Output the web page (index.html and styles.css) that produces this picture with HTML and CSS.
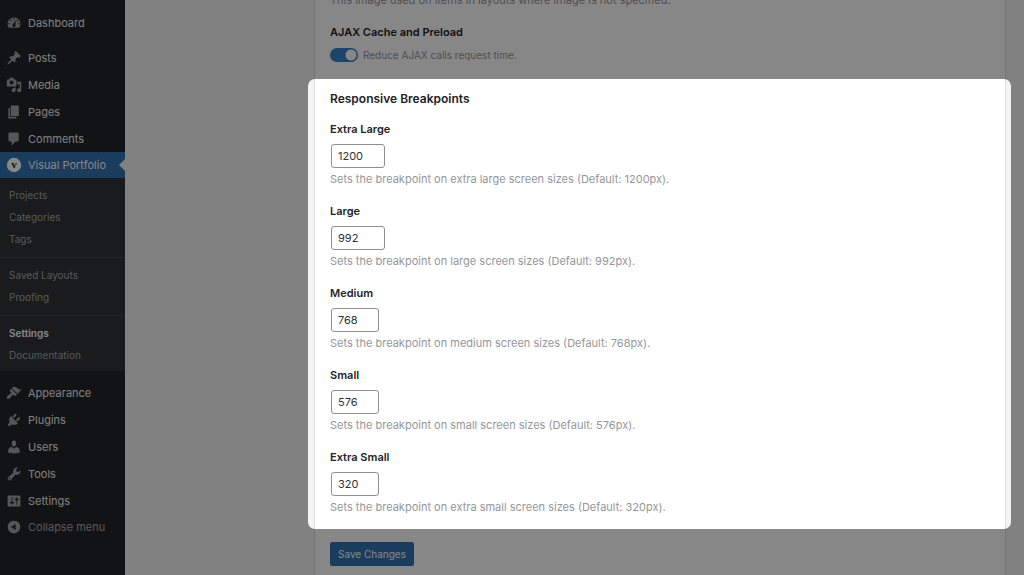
FILE: index.html
```
<!DOCTYPE html>
<html lang="en">
<head>
    <meta charset="UTF-8">
    <title>Settings | Visual Portfolio</title>
    <meta name="viewport" content="width=device-width, initial-scale=1.0">
    <link rel="stylesheet" href="styles.css">
</head>
<body>

    <nav class="sidebar">
        <ul class="menu">
            <li><a class="menu-item" href="#"><svg class="icon" viewBox="0 0 20 20"><path d="M3.76 16h12.48A7.998 7.998 0 0 0 10 3a7.998 7.998 0 0 0-6.24 13zM10 4c.55 0 1 .45 1 1s-.45 1-1 1-1-.45-1-1 .45-1 1-1zM6 6c.55 0 1 .45 1 1s-.45 1-1 1-1-.45-1-1 .45-1 1-1zm8 0c.55 0 1 .45 1 1s-.45 1-1 1-1-.45-1-1 .45-1 1-1zm-5.37 5.55L12 7v6c0 1.1-.9 2-2 2s-2-.9-2-2c0-.57.24-1.08.63-1.45zM4 10c.55 0 1 .45 1 1s-.45 1-1 1-1-.45-1-1 .45-1 1-1zm12 0c.55 0 1 .45 1 1s-.45 1-1 1-1-.45-1-1 .45-1 1-1z" fill-rule="evenodd"/></svg>Dashboard</a></li>
        </ul>

        <ul class="menu">
            <li><a class="menu-item" href="#"><svg class="icon" viewBox="0 0 20 20"><path d="M10.44 3.02l1.82-1.82 6.36 6.35-1.83 1.82c-1.05-.68-2.48-.57-3.41.36l-.75.75c-.92.93-1.04 2.35-.35 3.41l-1.83 1.82-2.41-2.41-2.8 2.79c-.42.42-3.38 2.71-3.8 2.29s1.86-3.39 2.28-3.81l2.79-2.79L4.1 9.36l1.83-1.82c1.05.69 2.48.57 3.4-.36l.75-.75c.93-.92 1.05-2.35.36-3.41z"/></svg>Posts</a></li>
            <li><a class="menu-item" href="#"><svg class="icon" viewBox="0 0 20 20"><path d="M13 11V4c0-.55-.45-1-1-1h-1.67L9 1H5L3.67 3H2c-.55 0-1 .45-1 1v7c0 .55.45 1 1 1h10c.55 0 1-.45 1-1zM7 4.5c1.38 0 2.5 1.12 2.5 2.5S8.38 9.5 7 9.5 4.5 8.38 4.5 7 5.62 4.5 7 4.5zM14 6h5v10.5c0 1.38-1.12 2.5-2.5 2.5S14 17.88 14 16.5s1.12-2.5 2.5-2.5c.17 0 .34.02.5.05V9h-3V6zm-4 8.05V13h2v3.5c0 1.38-1.12 2.5-2.5 2.5S7 17.88 7 16.5 8.12 14 9.5 14c.17 0 .34.02.5.05z" fill-rule="evenodd"/></svg>Media</a></li>
            <li><a class="menu-item" href="#"><svg class="icon" viewBox="0 0 20 20"><path d="M6 15V2h10v13H6zm-1 1h8v2H3V5h2v11z"/></svg>Pages</a></li>
            <li><a class="menu-item" href="#"><svg class="icon" viewBox="0 0 20 20"><path d="M5 2h9c1.1 0 2 .9 2 2v7c0 1.1-.9 2-2 2h-2l-5 5v-5H5c-1.1 0-2-.9-2-2V4c0-1.1.9-2 2-2z"/></svg>Comments</a></li>
            <li>
                <a class="menu-item current" href="#"><svg class="icon" viewBox="0 0 20 20"><circle cx="10" cy="10" r="9"/><text class="icon-mark" x="10" y="14" text-anchor="middle">v</text></svg>Visual Portfolio</a>
                <ul class="submenu">
                    <li><a href="#">Projects</a></li>
                    <li><a href="#">Categories</a></li>
                    <li><a href="#">Tags</a></li>
                    <li class="divider"></li>
                    <li><a href="#">Saved Layouts</a></li>
                    <li><a href="#">Proofing</a></li>
                    <li class="divider"></li>
                    <li><a class="active" href="#">Settings</a></li>
                    <li><a href="#">Documentation</a></li>
                </ul>
            </li>
        </ul>

        <ul class="menu">
            <li><a class="menu-item" href="#"><svg class="icon" viewBox="0 0 20 20"><path d="M14.48 11.06L7.41 3.99l1.5-1.5c.5-.56 2.3-.47 3.51.32 1.21.8 1.43 1.28 2.91 2.1 1.18.64 2.45 1.26 4.45.85zm-.71.71L6.7 4.7 4.93 6.47c-.39.39-.39 1.02 0 1.41l1.06 1.06c.39.39.39 1.03 0 1.42-.6.6-1.43 1.11-2.21 1.69-.35.26-.7.53-1.01.84C1.43 14.23.4 16.08 1.4 17.07c.99 1 2.84-.03 4.18-1.36.31-.31.58-.66.85-1.02.57-.78 1.08-1.61 1.69-2.21.39-.39 1.02-.39 1.41 0l1.06 1.06c.39.39 1.02.39 1.41 0z"/></svg>Appearance</a></li>
            <li><a class="menu-item" href="#"><svg class="icon" viewBox="0 0 20 20"><path d="M13.11 4.36L9.87 7.6 8 5.73l3.24-3.24c.35-.34 1.05-.2 1.56.32.52.51.66 1.21.31 1.55zm-8 1.77l.91-1.12 9.01 9.01-1.19.84c-.71.71-2.63 1.16-3.82 1.16H6.14L4.9 17.26c-.59.59-1.54.59-2.12 0-.59-.58-.59-1.53 0-2.12l1.24-1.24v-3.88c0-1.13.4-3.19 1.09-3.89zm7.26 3.97l3.24-3.24c.34-.35 1.04-.21 1.55.31.52.51.66 1.21.31 1.55l-3.24 3.25z"/></svg>Plugins</a></li>
            <li><a class="menu-item" href="#"><svg class="icon" viewBox="0 0 20 20"><path d="M10 9.25c-2.27 0-2.73-3.44-2.73-3.44C7 4.02 7.82 2 9.97 2c2.16 0 2.98 2.02 2.71 3.81 0 0-.41 3.44-2.68 3.44zm0 2.57L12.72 10c2.39 0 4.52 2.33 4.52 4.53v2.49s-3.65 1.13-7.24 1.13c-3.65 0-7.24-1.13-7.24-1.13v-2.49c0-2.25 1.94-4.48 4.47-4.48z"/></svg>Users</a></li>
            <li><a class="menu-item" href="#"><svg class="icon" viewBox="0 0 20 20"><path d="M16.68 9.77c-1.34 1.34-3.3 1.67-4.95.99l-5.41 6.52c-.99.99-2.59.99-3.58 0s-.99-2.59 0-3.57l6.52-5.42c-.68-1.65-.35-3.61.99-4.95 1.28-1.28 3.12-1.62 4.72-1.06l-2.89 2.89 2.82 2.82 2.86-2.87c.53 1.58.18 3.39-1.08 4.65zM3.81 16.21c.4.39 1.04.39 1.43 0 .4-.4.4-1.04 0-1.43-.39-.4-1.03-.4-1.43 0-.39.39-.39 1.03 0 1.43z" fill-rule="evenodd"/></svg>Tools</a></li>
            <li><a class="menu-item" href="#"><svg class="icon" viewBox="0 0 20 20"><path d="M18 16V4c0-.55-.45-1-1-1H3c-.55 0-1 .45-1 1v12c0 .55.45 1 1 1h14c.55 0 1-.45 1-1zM8 11h1c.55 0 1 .45 1 1s-.45 1-1 1H8v1.5c0 .28-.22.5-.5.5s-.5-.22-.5-.5V13H6c-.55 0-1-.45-1-1s.45-1 1-1h1V5.5c0-.28.22-.5.5-.5s.5.22.5.5V11zm5-2h-1c-.55 0-1-.45-1-1s.45-1 1-1h1V5.5c0-.28.22-.5.5-.5s.5.22.5.5V7h1c.55 0 1 .45 1 1s-.45 1-1 1h-1v5.5c0 .28-.22.5-.5.5s-.5-.22-.5-.5V9z" fill-rule="evenodd"/></svg>Settings</a></li>
            <li><button class="menu-item collapse" type="button"><svg class="icon" viewBox="0 0 20 20"><path d="M10 2.16c4.33 0 7.84 3.51 7.84 7.84s-3.51 7.84-7.84 7.84S2.16 14.33 2.16 10 5.71 2.16 10 2.16zm2 11.72V6.12L6.18 9.97z" fill-rule="evenodd"/></svg>Collapse menu</button></li>
        </ul>
    </nav>

    <main class="content">
        <form class="card">
            <p class="description image-note">This image used on items in layouts where image is not specified.</p>

            <h2 class="heading">AJAX Cache and Preload</h2>
            <label class="toggle">
                <input type="checkbox" checked>
                <span class="description">Reduce AJAX calls request time.</span>
            </label>

            <section class="breakpoints">
                <h2 class="heading section-title">Responsive Breakpoints</h2>

                <div class="field">
                    <label class="heading" for="bp-xl">Extra Large</label>
                    <input class="number wide" id="bp-xl" type="number" value="1200">
                    <p class="description">Sets the breakpoint on extra large screen sizes (Default: 1200px).</p>
                </div>
                <div class="field">
                    <label class="heading" for="bp-lg">Large</label>
                    <input class="number wide" id="bp-lg" type="number" value="992">
                    <p class="description">Sets the breakpoint on large screen sizes (Default: 992px).</p>
                </div>
                <div class="field">
                    <label class="heading" for="bp-md">Medium</label>
                    <input class="number" id="bp-md" type="number" value="768">
                    <p class="description">Sets the breakpoint on medium screen sizes (Default: 768px).</p>
                </div>
                <div class="field">
                    <label class="heading" for="bp-sm">Small</label>
                    <input class="number" id="bp-sm" type="number" value="576">
                    <p class="description">Sets the breakpoint on small screen sizes (Default: 576px).</p>
                </div>
                <div class="field">
                    <label class="heading" for="bp-xs">Extra Small</label>
                    <input class="number" id="bp-xs" type="number" value="320">
                    <p class="description">Sets the breakpoint on extra small screen sizes (Default: 320px).</p>
                </div>
            </section>

            <button class="save" type="submit">Save Changes</button>
        </form>
    </main>

</body>
</html>
```
FILE: styles.css
```
* {
    box-sizing: border-box;
}

body {
    display: flex;
    height: 100vh;
    margin: 0;
    overflow: hidden;
    background: #f4f4f4;
    color: #1d2327;
    font-family: Inter, "Liberation Sans", sans-serif;
    font-size: 11px;
    line-height: 16px;
}

h2, p, ul {
    margin: 0;
    padding: 0;
}

ul {
    list-style: none;
}

/* admin menu */
.sidebar {
    display: flex;
    flex-direction: column;
    flex: none;
    gap: 8px;
    width: 125px;
    padding-top: 9px;
    background: #222427;
}

.menu-item {
    position: relative;
    display: flex;
    align-items: center;
    gap: 6px;
    width: 100%;
    height: 27px;
    padding: 0 6px;
    border: 0;
    background: none;
    color: #f0f0f1;
    font: inherit;
    text-decoration: none;
    white-space: nowrap;
}

.icon {
    flex: none;
    width: 16px;
    height: 16px;
    fill: #a0a3a6;
}

.current {
    height: 26px;
    background: #3271b0;
    color: #fff;
}

.current .icon {
    fill: #fff;
}

.current .icon-mark {
    fill: #1d2327;
    font-family: "Liberation Serif", serif;
    font-size: 14px;
    font-weight: bold;
}

.current::after {
    content: "";
    position: absolute;
    top: 7px;
    right: 0;
    border: 6px solid transparent;
    border-left: 0;
    border-right-color: #f4f4f4;
}

.submenu {
    padding: 6px 0 5px;
    background: #303437;
}

.submenu a {
    display: block;
    padding: 3px 9px;
    color: #a7aaad;
    font-size: 10px;
    text-decoration: none;
}

.submenu .active {
    color: #fff;
    font-weight: 600;
}

.divider {
    height: 1px;
    margin: 7px 0 6px;
    background: #404447;
}

.collapse {
    height: 25px;
    color: #a7aaad;
}

/* settings form */
.content {
    flex: 1;
    padding: 0 18px 0 189px;
}

.card {
    display: flex;
    flex-direction: column;
    align-items: flex-start;
    height: 100%;
    padding: 0 15px;
    border: solid #dcdcde;
    border-width: 0 1px;
    background: #fff;
}

.heading {
    display: block;
    font-size: 11px;
    font-weight: 600;
    line-height: 16px;
}

.section-title {
    font-size: 12px;
}

.description {
    color: #94969a;
}

/* scrolled partly out of view */
.image-note {
    margin-top: -8px;
    padding-bottom: 16px;
}

.toggle {
    display: flex;
    align-items: center;
    gap: 5px;
    margin: 7px 0 16px;
    font-size: 10px;
}

.toggle input {
    appearance: none;
    width: 28px;
    height: 14px;
    margin: 0;
    border-radius: 7px;
    background: radial-gradient(circle at 21px 7px, #fff 5px, transparent 6px) #3582c4;
}

/* spotlight over the section, everything around it is dimmed */
.breakpoints {
    position: relative;
    align-self: stretch;
    padding: 12px 0 14px;
}

.breakpoints::after {
    content: "";
    position: absolute;
    inset: 0 -21px 0 -22px;
    border-radius: 7px;
    box-shadow: 0 0 0 2000px rgba(0, 0, 0, 0.47);
    pointer-events: none;
}

.field {
    margin-top: 14px;
}

.field + .field {
    margin-top: 16px;
}

.number {
    appearance: textfield;
    display: block;
    width: 48px;
    height: 24px;
    margin: 7px 1px 3px;
    padding: 0 6px;
    border: 1px solid #8c8f94;
    border-radius: 3px;
    background: #fff;
    color: #2c3338;
    font: inherit;
}

.number::-webkit-inner-spin-button {
    display: none;
}

.wide {
    width: 54px;
}

.save {
    height: 24px;
    margin-top: 13px;
    padding: 0 8px;
    border: 0;
    border-radius: 2px;
    background: #3271b0;
    color: #fff;
    font: inherit;
    font-size: 10px;
}
```
